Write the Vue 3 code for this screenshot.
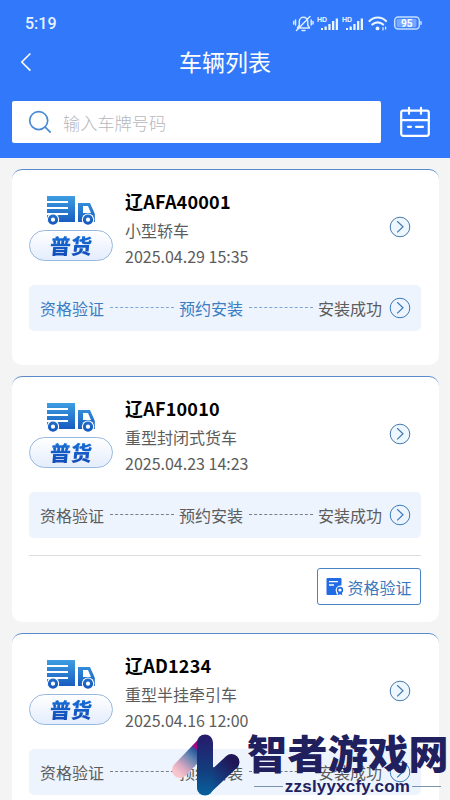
<script setup>
const vehicles = [
  { plate: '辽AFA40001', type: '小型轿车', time: '2025.04.29 15:35', done: 2, action: false },
  { plate: '辽AF10010', type: '重型封闭式货车', time: '2025.04.23 14:23', done: 0, action: true },
  { plate: '辽AD1234', type: '重型半挂牵引车', time: '2025.04.16 12:00', done: 0, action: true },
]
const steps = ['资格验证', '预约安装', '安装成功']
</script>

<template>
  <div class="screen">
    <header class="header">
      <div class="status">
        <span class="clock">5:19</span>
        <svg class="indicators" width="132" height="20" viewBox="0 0 132 20" fill="none">
          <g stroke="#d9ecff" stroke-width="1.5" stroke-linecap="round" stroke-linejoin="round">
            <path d="M4.5 14h12l-1.8-3V7.5a4.2 4.2 0 0 0-8.4 0V11zM9 16.5h3M3.5 16.5 17 2.5M2.5 6v5M.6 7.5v2.5M18.2 6v5M20 7.5v2.5" />
          </g>
          <g fill="#e9f5ff">
            <path d="M28 14h2v2h-2zM31.5 12.5h2.3V16h-2.3zM35.3 10h2.3v6h-2.3zM39 7h2.3v9H39zM42.7 4.500H45V16h-2.3z" />
            <path d="M53 14h2v2h-2zM56.5 12.5h2.3V16h-2.3zM60.3 10h2.3v6h-2.3zM64 7h2.3v9H64zM67.7 4.5H70V16h-2.3z" />
            <text class="hd" x="24" y="7.5">HD</text>
            <text class="hd" x="49" y="7.5">HD</text>
            <circle cx="84.5" cy="14.4" r="1.9" />
          </g>
          <g stroke="#e9f5ff" stroke-width="2.2" stroke-linecap="round">
            <path d="M76.5 7a11.5 11.5 0 0 1 16.5 0M79.3 10.5a7.7 7.7 0 0 1 10.8 0" />
            <path d="M90 13.5v2.5M92.6 13v2" stroke-width="1.2" />
          </g>
          <rect x="101.7" y="3" width="24.6" height="12" rx="3.5" stroke="#c6deff" stroke-width="1.5" />
          <rect x="103.5" y="4.8" width="20" height="8.4" rx="1.5" fill="#75a8ff" />
          <path d="M128 7.2v3.6" stroke="#c6deff" stroke-width="1.6" />
          <text class="level" x="108" y="12.7">95</text>
        </svg>
      </div>
      <div class="nav">
        <svg class="back" width="12" height="20" viewBox="0 0 12 20" fill="none" stroke="#fff" stroke-width="1.6">
          <path d="M10.4 1.5 1.8 10l8.6 8.6" />
        </svg>
        <h1>车辆列表</h1>
      </div>
      <div class="tools">
        <div class="search">
          <svg width="24" height="24" viewBox="0 0 24 24" fill="none" stroke="#4b8ad3" stroke-width="1.7" stroke-linecap="round">
            <circle cx="10.7" cy="10.6" r="9" />
            <path d="m17.2 17.2 5 5" />
          </svg>
          <span>输入车牌号码</span>
        </div>
        <svg width="32" height="32" viewBox="0 0 32 32" fill="none" stroke="#fff" stroke-width="2.2" stroke-linecap="round">
          <rect x="2.2" y="4.6" width="27.6" height="25.2" rx="2" />
          <path d="M2.5 14.2h27M10 1.8v6M22 1.8v6M9 20.8h3M17 20.8h7" />
        </svg>
      </div>
    </header>

    <main class="list">
      <article v-for="v in vehicles" :key="v.plate" class="card">
        <div class="summary">
          <div class="kind">
            <svg width="50" height="31" viewBox="0 0 50 31">
              <defs>
                <linearGradient id="truck" gradientUnits="userSpaceOnUse" x1="0" y1="1" x2="0" y2="29">
                  <stop offset="0" stop-color="#3d9de2" />
                  <stop offset="1" stop-color="#1558bd" />
                </linearGradient>
              </defs>
              <path
                fill="url(#truck)"
                fill-rule="evenodd"
                d="M1 1h28v26H1v-7h21v-2H1v-4h21v-2H1V8h21V6H1zM32 8h12l4 9 .8 2v8H32zM37 11v7h8l-3-7z"
              />
              <g fill="#fff">
                <circle cx="7" cy="24.7" r="6.2" />
                <circle cx="42" cy="24.7" r="6.2" />
              </g>
              <g fill="none" stroke="url(#truck)" stroke-width="3">
                <circle cx="7" cy="24.7" r="3.6" />
                <circle cx="42" cy="24.7" r="3.6" />
              </g>
            </svg>
            <span class="pill"><b>普货</b></span>
          </div>
          <div class="info">
            <h2>{{ v.plate }}</h2>
            <p>{{ v.type }}</p>
            <p class="time">{{ v.time }}</p>
          </div>
          <svg class="go" width="22" height="22" viewBox="0 0 22 22" fill="#edf7ff" stroke="#4779aa">
            <circle cx="11" cy="11" r="9.8" />
            <path d="m8.2 5.3 5.8 5.5-5.8 5.6" fill="none" stroke-width="1.2" />
          </svg>
        </div>
        <div class="progress">
          <template v-for="(step, i) in steps" :key="step">
            <i v-if="i" class="link" :class="{ active: v.done }"></i>
            <span :class="{ active: i < v.done }">{{ step }}</span>
          </template>
          <svg class="next" width="22" height="22" viewBox="0 0 22 22" fill="none" stroke="#397dbe">
            <circle cx="11" cy="11" r="9.8" />
            <path d="m8.2 5.3 5.8 5.5-5.8 5.6" stroke-width="1.2" />
          </svg>
        </div>
        <div v-if="v.action" class="actions">
          <button type="button">
            <svg width="18" height="19" viewBox="0 0 18 19">
              <path d="M1.5 1h13a1 1 0 0 1 1 1v6.500a5 5 0 0 0-5.2 7.5l.7 2H1.5a1 1 0 0 1-1-1V2a1 1 0 0 1 1-1z" fill="#216ce5" />
              <path d="M3 4.6h9M3 8h5" stroke="#fff" stroke-width="1.4" />
              <path d="m12.2 15.2-.6 3 2.4-1 2.4 1-.6-3" fill="#216ce5" />
              <circle cx="14" cy="13" r="2.4" fill="#fff" stroke="#216ce5" stroke-width="1.6" />
            </svg>
            资格验证
          </button>
        </div>
      </article>
    </main>

    <div class="brand">
      <svg width="70" height="64" viewBox="0 0 70 64" fill="none" stroke-width="16" stroke-linecap="round">
        <defs>
          <linearGradient id="tail" gradientUnits="userSpaceOnUse" x1="6" y1="40" x2="33" y2="10">
            <stop offset="0" stop-color="#f8c5cd" />
            <stop offset=".2" stop-color="#dba9c0" />
            <stop offset=".5" stop-color="#6b86b5" />
            <stop offset=".72" stop-color="#26569a" />
            <stop offset=".78" stop-color="#b10086" />
            <stop offset="1" stop-color="#72117c" />
          </linearGradient>
          <linearGradient id="stem" gradientUnits="userSpaceOnUse" x1="34" y1="2" x2="34" y2="62">
            <stop offset="0" stop-color="#271b6b" />
            <stop offset=".6" stop-color="#123e7e" />
            <stop offset="1" stop-color="#08619d" />
          </linearGradient>
          <linearGradient id="arm" gradientUnits="userSpaceOnUse" x1="34" y1="56" x2="61" y2="28">
            <stop offset="0" stop-color="#08619d" />
            <stop offset=".45" stop-color="#163b7e" />
            <stop offset="1" stop-color="#201657" />
          </linearGradient>
        </defs>
        <path d="M9 37 33 12" stroke="url(#tail)" />
        <path d="M34 54 60.500 29" stroke="url(#arm)" />
        <path d="M34 9.500V54.500" stroke="url(#stem)" />
      </svg>
      <div class="brand-text">
        <strong>智者游戏网</strong>
        <span class="site">zzslyyxcfy.com</span>
      </div>
    </div>
  </div>
</template>

<style>
body {
  background: #f4f4f5;
  overflow: hidden;
}
</style>

<style scoped>
.screen {
  position: relative;
  width: 450px;
  height: 800px;
  overflow: hidden;
  background: #f4f4f5;
  font-family: "Noto Sans CJK SC", sans-serif;
  color: #5c5c5c;
}
.header {
  height: 158px;
  box-sizing: border-box;
  background: #3278fa;
  color: #fff;
}
.status {
  height: 40px;
  box-sizing: border-box;
  display: flex;
  justify-content: space-between;
  padding: 14px 25px 0;
}
.clock {
  font: 500 16px/20px Roboto, sans-serif;
  color: #e6f3ff;
}
.hd {
  font: 700 7px "Liberation Sans", sans-serif;
}
.level {
  font: 700 10px Roboto, sans-serif;
  fill: #fff;
}
.nav {
  height: 44px;
  display: grid;
  grid-template-columns: 60px 1fr 60px;
  align-items: center;
}
.back {
  margin-left: 20px;
}
h1 {
  margin: 0;
  text-align: center;
  font-size: 23px;
  font-weight: 400;
  line-height: 32px;
  padding-bottom: 2px;
}
.tools {
  display: flex;
  align-items: center;
  gap: 18px;
  padding: 17px 19px 0 12px;
}
.search {
  width: 369px;
  height: 42px;
  box-sizing: border-box;
  display: flex;
  align-items: center;
  gap: 11px;
  padding-left: 16px;
  border-radius: 2px;
  background: #fff;
  color: #b6b7bd;
  font-size: 17.2px;
  font-weight: 300;
}
.list {
  display: flex;
  flex-direction: column;
  gap: 11.4px;
  padding: 11px 11px 0 12px;
}
.card {
  min-height: 196px;
  box-sizing: border-box;
  padding: 18px 18px 16.6px 17px;
  border-top: 1px solid #5b8cca;
  border-radius: 10px;
  background: #fff;
}
.summary {
  display: flex;
  height: 97px;
}
.kind {
  width: 84px;
  display: flex;
  flex-direction: column;
  align-items: center;
  padding-top: 7px;
}
.pill {
  width: 84px;
  height: 31px;
  box-sizing: border-box;
  margin-top: 4px;
  border: 1px solid #98b9df;
  border-radius: 16px;
  background: linear-gradient(#fff, #e4edfc);
  text-align: center;
}
.pill b {
  display: block;
  transform: skewX(-5deg);
  font-size: 21px;
  font-weight: 900;
  line-height: 28px;
  background: linear-gradient(#1875dc, #1247b3);
  background-clip: text;
  color: transparent;
}
.info {
  flex: 1;
  padding-left: 12px;
}
h2 {
  margin: 0;
  color: #000;
  font-size: 18px;
  font-weight: 700;
  line-height: 26px;
  letter-spacing: 0.2px;
}
p {
  margin: 0;
  padding-top: 3px;
  font-size: 16px;
  line-height: 26px;
}
.time {
  padding-top: 0;
}
.go {
  margin: 28px 10px 0 0;
}
.progress {
  height: 46px;
  box-sizing: border-box;
  display: flex;
  align-items: center;
  padding: 0 10px 0 11px;
  border-radius: 5px;
  background: #edf4fe;
  font-size: 16px;
  line-height: 24px;
}
.active {
  color: #3b7dc2;
}
.link {
  width: 64px;
  margin: 0 5.500px;
  border-top: 1px dashed #777f8c;
  transform: translateY(-1px);
}
.link.active {
  border-color: #7da6d3;
}
.next {
  margin-left: auto;
}
.actions {
  display: flex;
  justify-content: flex-end;
  margin-top: 17px;
  padding-top: 12px;
  border-top: 1px solid #dcdddf;
}
button {
  width: 104px;
  height: 37px;
  display: flex;
  align-items: center;
  justify-content: center;
  gap: 3px;
  padding: 0;
  border: 1px solid #4a83c4;
  border-radius: 3px;
  background: #fff;
  color: #3b78bd;
  font: 16px/24px "Noto Sans CJK SC", sans-serif;
  white-space: nowrap;
}
.brand {
  position: absolute;
  left: 171px;
  top: 733px;
  display: flex;
  gap: 6px;
  color: #20205f;
}
.brand-text {
  width: 203px;
}
.brand strong {
  display: block;
  height: 44px;
  font-size: 40px;
  font-weight: 900;
  line-height: 39px;
  letter-spacing: 0.4px;
  white-space: nowrap;
}
.site {
  display: flex;
  align-items: center;
  justify-content: space-between;
  width: 187px;
  margin: 0 0 0 7px;
  font: 700 17px/19px "Liberation Sans", sans-serif;
  letter-spacing: 0.2px;
}
.site::before,
.site::after {
  content: "";
  width: 29px;
  border-top: 1px solid #7994ad;
}
</style>
